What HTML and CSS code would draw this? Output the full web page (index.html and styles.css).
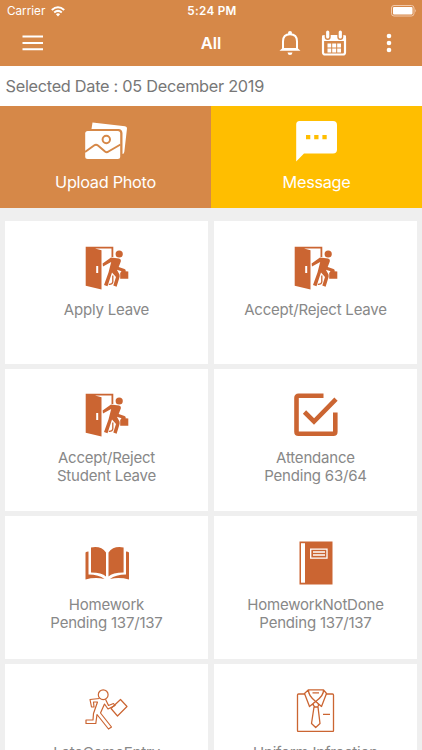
FILE: index.html
```html
<!DOCTYPE html>
<html lang="en">
<head>
<meta charset="utf-8">
<title>All</title>
<link rel="stylesheet" href="styles.css">
</head>
<body>
<svg width="0" height="0" class="defs">
  <symbol id="leave" viewBox="0 0 44 44">
    <path fill="currentColor" d="M.7.8H28.3V11H26.5V2.6H10L16.5 4.3V43.5L.7 39.7ZM11.2 20v7h2v-7Z"/>
    <circle cx="34.2" cy="8" r="3.6" fill="currentColor"/>
    <path fill="currentColor" d="M26 11.6L34 12.5Q36.300 13 35.800 15.500L33.700 21L39.500 23Q41.500 24 40.500 25.200L43.300 25.400V32.800H35.200V27L36.500 25.200L31.900 23.800L34.500 28.500Q35 30 34.300 32L31.600 40.800L28.300 39.600L31 31L27 26.500L22.500 40.300L19 39L23.500 26.500L26.200 16L18 20.500L17.600 17.400Z"/>
    <path d="M27.800 29.500V36Q27.400 38.500 23.800 38.300" fill="none" stroke="currentColor" stroke-width="1.300"/>
  </symbol>
</svg>
<header class="header">
  <div class="status">
    <div class="carrier"><span>Carrier</span>
      <svg width="14" height="11" viewBox="0 0 14 11" fill="none" stroke="#fff" stroke-width="2"><path d="M.8 4Q7-1.500 13.200 4M3.200 6.500Q7 3.300 10.800 6.500"/><path d="M4.900 8.200Q7 6.500 9.100 8.200L7 10.500Z" fill="#fff" stroke="none"/></svg>
    </div>
    <span class="clock">5:24 PM</span>
    <svg class="battery" width="26" height="12" viewBox="0 0 26 12"><rect x=".5" y=".5" width="22.500" height="10.500" rx="2.500" fill="none" stroke="#f2c9aa"/><rect x="2" y="2" width="19.500" height="7.500" rx="1" fill="#fff"/><path d="M24.200 4Q26 5.700 24.200 7.500Z" fill="#f2c9aa"/></svg>
  </div>
  <div class="nav">
    <svg class="menu" width="22" height="16" viewBox="0 0 22 16" stroke="#fff" stroke-width="2"><path d="M.5 1.500H21M.5 8H21M.5 14.300H21"/></svg>
    <h1>All</h1>
    <div class="actions">
      <svg width="22" height="26" viewBox="0 0 22 26"><path d="M4 19.500V11.500Q4 4.300 11 4.300T18 11.500V19.500" fill="none" stroke="#fff" stroke-width="2"/><path d="M.5 20.800L3.600 18H18.400L21.500 20.800ZM8.500 22.500h5Q13.200 25 11 25T8.500 22.500Z" fill="#fff"/><circle cx="11" cy="3" r="2" fill="#fff"/></svg>
      <svg width="26" height="26" viewBox="0 0 26 26"><rect x="2" y="6" width="22" height="18.500" rx="2" fill="none" stroke="#fff" stroke-width="2.200"/><path d="M1 5.500H25V11H1Z" fill="#fff"/><path d="M6.700 3V7M19.300 3V7" stroke="#d68848" stroke-width="6" stroke-linecap="round"/><path d="M6.700 2V7M19.300 2V7" stroke="#fff" stroke-width="3.200" stroke-linecap="round"/><path d="M6.500 13.500H20V22.500H6.500Z" fill="#fff"/><path d="M10.700 13V23M15.700 13V23M6 18H21" stroke="#d68848" stroke-width="1"/></svg>
      <svg width="6" height="20" viewBox="0 0 6 20" fill="#fff"><circle cx="3" cy="3" r="2.300"/><circle cx="3" cy="10" r="2.300"/><circle cx="3" cy="17" r="2.300"/></svg>
    </div>
  </div>
</header>
<p class="date"><span>Selected Date : 05 December 2019</span></p>
<section class="tabs">
  <div class="tab photo">
    <svg width="44" height="44" viewBox="0 0 44 44"><path d="M8.500 2.500L41 6.200Q43.200 6.500 43 8.500L40.300 32Q40 34 38.500 34V13Q38 9 34.500 9H7.500Z" fill="#fff"/><rect x="1.200" y="11" width="35" height="28" rx="2.500" fill="#fff"/><g fill="none" stroke="#d68848" stroke-width="2"><circle cx="22.300" cy="19.500" r="3.700"/><path d="M1 32L10 25.500Q12 24 14 25.500L21 31.500Q22.700 32.800 24.500 31.500L36.500 24.500"/></g></svg>
    <span>Upload Photo</span>
  </div>
  <div class="tab message">
    <svg width="44" height="44" viewBox="0 0 44 44"><path d="M4.500 1H38Q42 1 42 5V29.500Q42 33.500 38 33.500H9L1.200 41.500V4.500Q1.200 1 4.500 1Z" fill="#fff"/><path d="M11 15h4.300v4.300H11zM19.200 15h4.300v4.300h-4.300zM27.400 15h4.300v4.300h-4.300z" fill="#ffbe00"/></svg>
    <span>Message</span>
  </div>
</section>
<main class="grid">
  <article class="card"><svg><use href="#leave"/></svg><p>Apply Leave</p></article>
  <article class="card"><svg><use href="#leave"/></svg><p>Accept/Reject Leave</p></article>
  <article class="card"><svg><use href="#leave"/></svg><p>Accept/Reject<br>Student Leave</p></article>
  <article class="card">
    <svg viewBox="0 0 44 44" fill="none" stroke="currentColor" stroke-width="4.600"><path d="M29.500 2.800H4.500Q2.500 2.800 2.500 4.800V38.800Q2.500 40.800 4.500 40.800H39.300Q41.300 40.800 41.300 38.800V19.500"/><path d="M10.500 19L20 28.500L42 6.200"/></svg>
    <p>Attendance<br>Pending 63/64</p></article>
  <article class="card">
    <svg viewBox="0 0 44 44" fill="currentColor"><path d="M6 6.500Q16 4.500 21 11.500V35.500Q17 31.500 6 31.500ZM38.600 6.500Q28.500 4.500 23.500 11.500V35.500Q27.500 31.500 38.600 31.500ZM.5 11.500Q1.500 10.500 3.500 10.500V33.500Q14 33.500 19.500 38Q10 36 .5 38.500ZM44 11.500Q43 10.500 41 10.500V33.500Q30.500 33.500 25 38Q34.500 36 44 38.500Z"/></svg>
    <p>Homework<br>Pending 137/137</p></article>
  <article class="card">
    <svg viewBox="0 0 44 44"><path d="M5.500.5H38.500V43.500H5.500Z" fill="currentColor"/><path d="M7 2.200H11V41.700H7Z" fill="#fff"/><g fill="none" stroke="#fff"><path d="M16.700 8.200H33V17.200H16.700Z" stroke-width="1.300"/><path d="M19 11H31M19 14H31" stroke-width="1.300"/></g></svg>
    <p>HomeworkNotDone<br>Pending 137/137</p></article>
  <article class="card">
    <svg viewBox="0 0 44 44" fill="none" stroke="currentColor" stroke-width="1.200" stroke-linejoin="round"><circle cx="18.200" cy="6.700" r="4.900"/><path d="M14.500 10.500L5 11.500L6.500 19H9L8.500 14L12.500 14L8.500 25.500L8 32H1V35.500H10.800L12 26.500L23.500 41L26.500 39L15.500 25L19.500 16L23 21L30 17.500L28.500 15.500L23.500 17.500L20.500 11.300"/><path d="M35.500 11.500L42 18.500L32.500 28L26 20.500ZM27.500 19L30.500 16.500"/></svg>
    <p>LateComeEntry</p></article>
  <article class="card">
    <svg viewBox="0 0 44 44" fill="none" stroke="currentColor" stroke-width="1.300" stroke-linejoin="round"><path d="M11 6H4.500Q3.500 6 3.500 7V42.500Q3.500 43.500 4.500 43.500H38.500Q39.500 43.500 39.500 42.500V7Q39.500 6 38.500 6H32"/><path d="M14.500 1.800H29.500L32.500 5.500L27.500 18.500L21.700 13.500L15.500 18.500L10.500 5.500ZM14.500 1.800Q14 7.500 21.700 13.500Q30 7.500 29.500 1.800M18.500 4.800H25M19.700 14.500L19.200 17L20.700 19H23.700L24.700 17L23.200 14.500M20 19L17.500 35.500L21.700 39.500L26 35.500L24 19M29 26.300H36"/></svg>
    <p>Uniform Infraction</p></article>
</main>
</body>
</html>
```
FILE: styles.css
```css
* { box-sizing: border-box; }
html, body { height: 750px; overflow: hidden; }
body { margin: 0; background: #efefef; font-family: Inter, "Liberation Sans", sans-serif; }
h1, p { margin: 0; font-weight: 400; }
svg { display: block; flex: none; }
.defs { display: none; }
.header { height: 65.500px; background: #d68848; color: #fff; }
.status { height: 22px; display: grid; grid-template-columns: 1fr auto 1fr; align-items: center; padding: 0 5px 0 7px; font-size: 11.700px; }
.carrier { display: flex; align-items: center; gap: 6px; }
.clock { font-weight: 600; letter-spacing: .3px; }
.battery { justify-self: end; }
.nav { height: 42px; display: grid; grid-template-columns: 1fr auto 1fr; align-items: center; padding: 0 30px 0 22px; }
.nav h1 { font-size: 16.500px; font-weight: 600; margin-right: -8px; }
.actions { display: flex; justify-content: flex-end; align-items: center; gap: 19px; }
.actions svg:nth-child(2) { margin-left: 1px; }
.actions svg:nth-child(3) { margin-left: 20px; }
.date { height: 40px; background: #fff; color: #777; font-size: 16.300px; line-height: 40px; padding-left: 5.500px; letter-spacing: -.28px; }
.tabs { display: grid; grid-template-columns: 1fr 1fr; height: 102.500px; color: #fff; }
.tab { display: flex; flex-direction: column; align-items: center; padding-top: 14.500px; font-size: 16.300px; line-height: 20px; letter-spacing: -.3px; }
.tab span { margin-top: 8px; }
.photo { background: #d68848; }
.message { background: #ffbe00; }
.grid { display: grid; grid-template-columns: 1fr 1fr; grid-auto-rows: 142.500px; gap: 5px 6px; padding: 13.300px 5px 0; }
.card { background: #fff; display: flex; flex-direction: column; align-items: center; padding-top: 24.500px; color: #cb6532; }
.card svg { width: 44px; height: 44px; }
.card p { margin-top: 11.300px; color: #888; font-size: 15px; line-height: 18px; letter-spacing: -.2px; text-align: center; }
```
